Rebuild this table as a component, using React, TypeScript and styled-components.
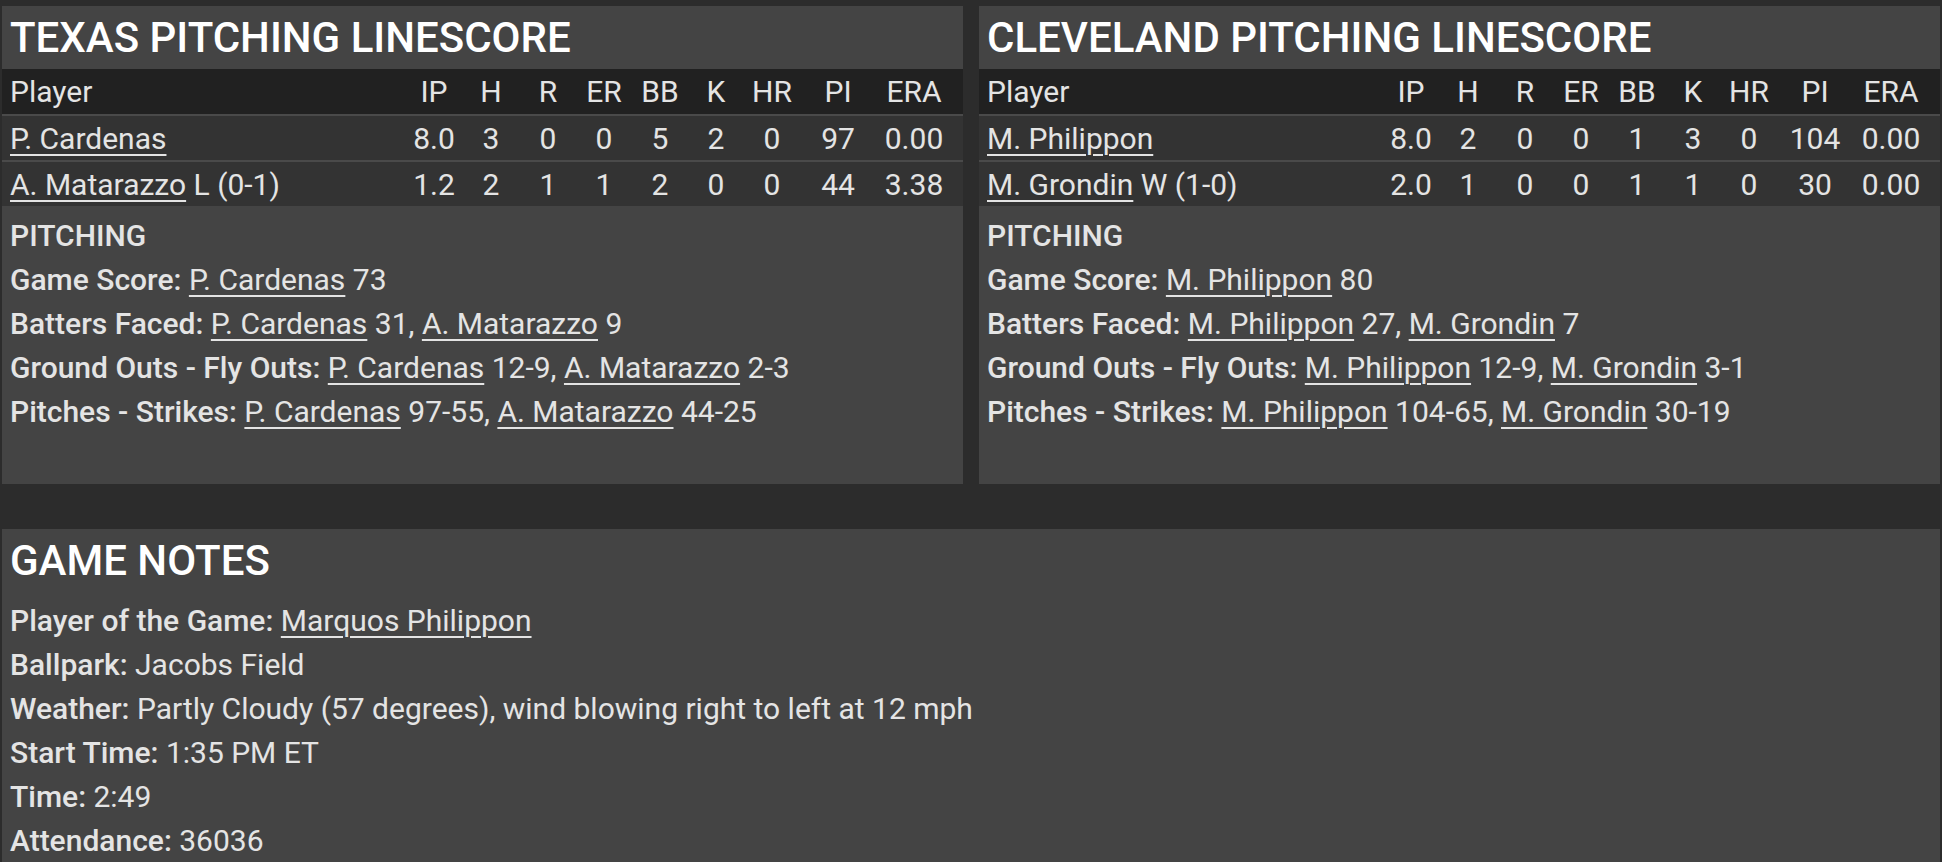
import styled, { createGlobalStyle } from "styled-components";

const GlobalStyle = createGlobalStyle`
  html, body {
    margin: 0;
    padding: 0;
    background: #2c2c2c;
  }
  body {
    font-family: Roboto, "Liberation Sans", sans-serif;
    color: #e4e4e4;
  }
`;

const Page = styled.div`
  padding: 6px 2px 0 2px;
  display: flex;
  flex-direction: column;
  gap: 45px;
`;

const TopRow = styled.div`
  display: grid;
  grid-template-columns: 1fr 1fr;
  gap: 16px;
`;

const Panel = styled.section`
  background: #444444;
  display: flex;
  flex-direction: column;
`;

const PanelTitle = styled.h2`
  margin: 0;
  height: 63px;
  line-height: 64px;
  padding: 0 8px;
  font-size: 42px;
  font-weight: 500;
  color: #ffffff;
  white-space: nowrap;
`;

const COLS = "1fr 58px 56px 58px 54px 58px 54px 58px 74px 78px";

const HeaderRow = styled.div`
  display: grid;
  grid-template-columns: ${COLS};
  align-items: center;
  height: 45px;
  padding: 0 10px 0 8px;
  background: #212121;
  font-size: 30px;
`;

const DataRow = styled.div`
  display: grid;
  grid-template-columns: ${COLS};
  align-items: center;
  height: 44px;
  padding: 0 10px 0 8px;
  background: #333333;
  border-top: 2px solid #4a4a4a;
  font-size: 30px;
`;

const Cell = styled.span<{ $left?: boolean }>`
  text-align: ${(p) => (p.$left ? "left" : "center")};
  white-space: nowrap;
`;

const PlayerLink = styled.a`
  color: inherit;
  text-decoration: underline;
  text-decoration-thickness: 2px;
  text-underline-offset: 5px;
  cursor: pointer;
`;

const Section = styled.div<{ $top: number; $bottom: number }>`
  padding: ${(p) => p.$top}px 8px ${(p) => p.$bottom}px 8px;
  font-size: 30px;
`;

const Line = styled.div`
  line-height: 44px;
  white-space: nowrap;
`;

const SubHead = styled.div`
  line-height: 44px;
  font-weight: 500;
`;

const Label = styled.span`
  font-weight: 500;
`;

type Pitcher = {
  name: string;
  note?: string;
  stats: string[];
};

type Team = {
  team: string;
  pitchers: Pitcher[];
  gameScore: [string, string];
  battersFaced: [string, string][];
  goFo: [string, string][];
  pitches: [string, string][];
};

const HEADERS = ["IP", "H", "R", "ER", "BB", "K", "HR", "PI", "ERA"];

const teams: Team[] = [
  {
    team: "TEXAS",
    pitchers: [
      { name: "P. Cardenas", stats: ["8.0", "3", "0", "0", "5", "2", "0", "97", "0.00"] },
      { name: "A. Matarazzo", note: "L (0-1)", stats: ["1.2", "2", "1", "1", "2", "0", "0", "44", "3.38"] },
    ],
    gameScore: ["P. Cardenas", "73"],
    battersFaced: [["P. Cardenas", "31"], ["A. Matarazzo", "9"]],
    goFo: [["P. Cardenas", "12-9"], ["A. Matarazzo", "2-3"]],
    pitches: [["P. Cardenas", "97-55"], ["A. Matarazzo", "44-25"]],
  },
  {
    team: "CLEVELAND",
    pitchers: [
      { name: "M. Philippon", stats: ["8.0", "2", "0", "0", "1", "3", "0", "104", "0.00"] },
      { name: "M. Grondin", note: "W (1-0)", stats: ["2.0", "1", "0", "0", "1", "1", "0", "30", "0.00"] },
    ],
    gameScore: ["M. Philippon", "80"],
    battersFaced: [["M. Philippon", "27"], ["M. Grondin", "7"]],
    goFo: [["M. Philippon", "12-9"], ["M. Grondin", "3-1"]],
    pitches: [["M. Philippon", "104-65"], ["M. Grondin", "30-19"]],
  },
];

function PairList({ items }: { items: [string, string][] }) {
  return (
    <>
      {items.map(([name, val], i) => (
        <span key={name}>
          {i > 0 && ", "}
          <PlayerLink>{name}</PlayerLink> {val}
        </span>
      ))}
    </>
  );
}

function Linescore({ data }: { data: Team }) {
  return (
    <Panel>
      <PanelTitle>{data.team} PITCHING LINESCORE</PanelTitle>
      <HeaderRow>
        <Cell $left>Player</Cell>
        {HEADERS.map((h) => (
          <Cell key={h}>{h}</Cell>
        ))}
      </HeaderRow>
      <div>
        {data.pitchers.map((p) => (
          <DataRow key={p.name}>
            <Cell $left>
              <PlayerLink>{p.name}</PlayerLink>
              {p.note && ` ${p.note}`}
            </Cell>
            {p.stats.map((s, i) => (
              <Cell key={i}>{s}</Cell>
            ))}
          </DataRow>
        ))}
      </div>
      <Section $top={8} $bottom={50}>
        <SubHead>PITCHING</SubHead>
        <Line>
          <Label>Game Score:</Label> <PlayerLink>{data.gameScore[0]}</PlayerLink> {data.gameScore[1]}
        </Line>
        <Line>
          <Label>Batters Faced:</Label> <PairList items={data.battersFaced} />
        </Line>
        <Line>
          <Label>Ground Outs - Fly Outs:</Label> <PairList items={data.goFo} />
        </Line>
        <Line>
          <Label>Pitches - Strikes:</Label> <PairList items={data.pitches} />
        </Line>
      </Section>
    </Panel>
  );
}

export default function App() {
  return (
    <>
      <GlobalStyle />
      <Page>
        <TopRow>
          {teams.map((t) => (
            <Linescore key={t.team} data={t} />
          ))}
        </TopRow>
        <Panel>
          <PanelTitle>GAME NOTES</PanelTitle>
          <Section $top={7} $bottom={20}>
            <Line>
              <Label>Player of the Game:</Label> <PlayerLink>Marquos Philippon</PlayerLink>
            </Line>
            <Line>
              <Label>Ballpark:</Label> Jacobs Field
            </Line>
            <Line>
              <Label>Weather:</Label> Partly Cloudy (57 degrees), wind blowing right to left at 12 mph
            </Line>
            <Line>
              <Label>Start Time:</Label> 1:35 PM ET
            </Line>
            <Line>
              <Label>Time:</Label> 2:49
            </Line>
            <Line>
              <Label>Attendance:</Label> 36036
            </Line>
          </Section>
        </Panel>
      </Page>
    </>
  );
}
